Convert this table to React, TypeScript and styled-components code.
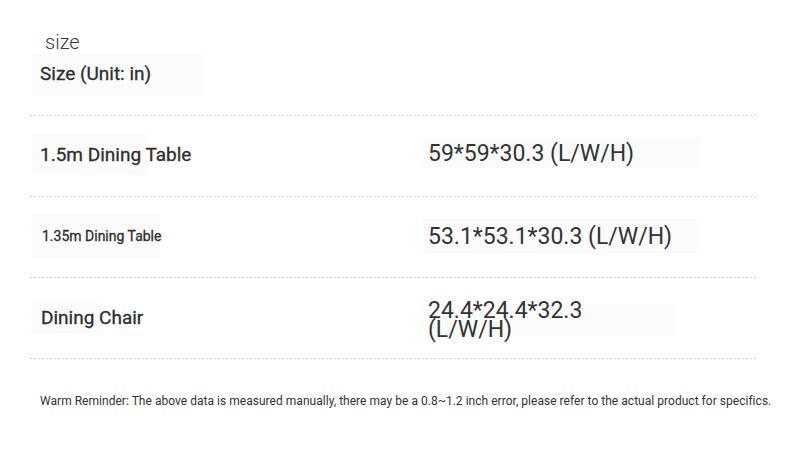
import React from "react";
import styled, { createGlobalStyle } from "styled-components";

const Global = createGlobalStyle`
  html, body { margin: 0; padding: 0; background: #ffffff; }
  body { font-family: Roboto, "Liberation Sans", sans-serif; color: #333333; }
`;

const Page = styled.div`
  width: 790px;
  height: 461px;
  box-sizing: border-box;
  padding: 30px 32px 0 30px;
  display: flex;
  flex-direction: column;
`;

const Title = styled.div`
  font-family: Roboto, sans-serif;
  font-weight: 300;
  font-size: 20px;
  line-height: 24px;
  color: #3a3a3a;
  padding-left: 15px;
  height: 24px;
`;

const HeadBox = styled.div`
  margin-left: 2px;
  margin-bottom: 20px;
  width: 171px;
  height: 41px;
  background: #fbfbfb;
  display: flex;
  align-items: center;
  padding: 0 0 3px 8px;
  box-sizing: border-box;
  font-size: 19px;
  font-weight: 400;
  color: #2e2e2e;
  -webkit-text-stroke: 0.3px #2e2e2e;
`;

const Divider = styled.div`
  height: 1px;
  width: 728px;
  background-image: linear-gradient(to right, #d2d2d2 50%, transparent 50%);
  background-size: 4px 1px;
  background-repeat: repeat-x;
`;

const Row = styled.div`
  height: 80px;
  display: grid;
  grid-template-columns: 391px 1fr;
  align-items: center;
`;

const Cell = styled.div<{ $w: number; $h: number; $pad: number; $up: number }>`
  width: ${(p) => p.$w}px;
  height: ${(p) => p.$h}px;
  margin-left: 2px;
  margin-bottom: ${(p) => p.$up * 2}px;
  background: #fbfbfb;
  display: flex;
  align-items: center;
  padding-left: ${(p) => p.$pad}px;
  box-sizing: border-box;
  white-space: nowrap;
  overflow: visible;
`;

const Label = styled.span<{ $size: number }>`
  font-size: ${(p) => p.$size}px;
  font-weight: 400;
  color: #2e2e2e;
  -webkit-text-stroke: 0.3px #2e2e2e;
`;

const Value = styled.span<{ $max?: number }>`
  font-size: 23px;
  font-weight: 400;
  line-height: 19px;
  color: #333;
  white-space: normal;
  max-width: ${(p) => (p.$max ? `${p.$max}px` : "none")};
`;

const Reminder = styled.div`
  margin-top: 35px;
  padding-left: 10px;
  font-size: 12px;
  line-height: 14px;
  color: #333;
  white-space: nowrap;
  letter-spacing: 0.03px;
`;

const rows = [
  { label: "1.5m Dining Table", lSize: 19, lw: 115, lh: 40, lp: 8, lu: 2, value: "59*59*30.3 (L/W/H)", vw: 277, vh: 30, vp: 5, vu: 3 },
  { label: "1.35m Dining Table", lSize: 14, lw: 128, lh: 42, lp: 10, lu: 1, value: "53.1*53.1*30.3 (L/W/H)", vw: 277, vh: 34, vp: 5, vu: 1 },
  { label: "Dining Chair", lSize: 19, lw: 71, lh: 32, lp: 9, lu: 1, value: "24.4*24.4*32.3 (L/W/H)", vw: 252, vh: 32, vp: 5, vu: -1.5, max: 175 },
];

export default function App() {
  return (
    <>
      <Global />
      <Page>
        <Title>size</Title>
        <HeadBox>Size (Unit: in)</HeadBox>
        <Divider />
        {rows.map((r) => (
          <React.Fragment key={r.label}>
            <Row>
              <Cell $w={r.lw} $h={r.lh} $pad={r.lp} $up={r.lu}>
                <Label $size={r.lSize}>{r.label}</Label>
              </Cell>
              <Cell $w={r.vw} $h={r.vh} $pad={r.vp} $up={r.vu}>
                <Value $max={r.max}>{r.value}</Value>
              </Cell>
            </Row>
            <Divider />
          </React.Fragment>
        ))}
        <Reminder>
          Warm Reminder: The above data is measured manually, there may be a 0.8~1.2 inch error, please refer to the actual product for specifics.
        </Reminder>
      </Page>
    </>
  );
}
